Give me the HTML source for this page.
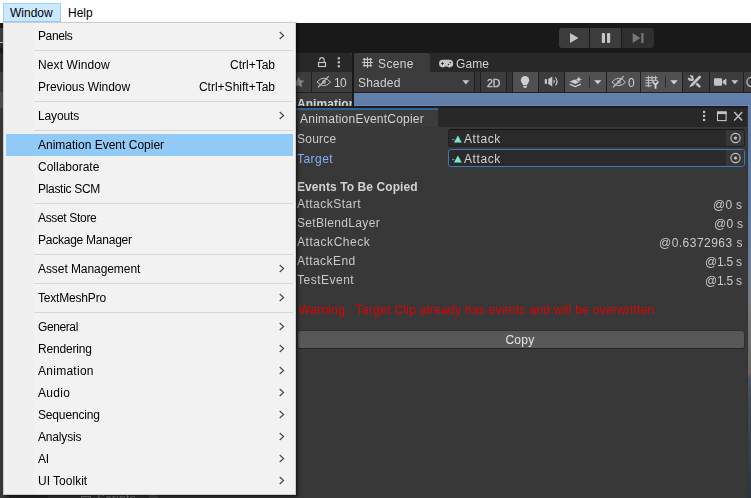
<!DOCTYPE html>
<html>
<head>
<meta charset="utf-8">
<title>Window menu</title>
<style>
html,body{margin:0;padding:0;}
body{width:751px;height:498px;position:relative;overflow:hidden;background:#383838;font-family:"Liberation Sans",sans-serif;font-size:12px;}
.abs{position:absolute;}
.abs, .abs *{box-sizing:border-box;}
/* ---------- Unity editor ---------- */
.u{color:#d2d2d2;white-space:nowrap;line-height:14px;}
.ut{will-change:transform;position:absolute;white-space:nowrap;line-height:14px;height:14px;color:#c9c9c9;}
.row-r{will-change:transform;position:absolute;right:9px;white-space:nowrap;line-height:14px;height:14px;color:#c9c9c9;text-align:right;letter-spacing:0.3px;}
.tb{position:absolute;top:72px;height:20px;background:#3c3c3c;}
.tb.on{background:#505050;}
/* ---------- Win menu ---------- */
#menubar{left:0;top:0;width:751px;height:23px;background:#fff;}
#menu{left:3px;top:22px;width:293px;height:473px;background:#f2f2f2;border:1px solid #cccccc;box-shadow:2px 2px 3px rgba(0,0,0,0.6);}
.mi{position:absolute;left:2px;width:287px;height:22px;line-height:23px;color:#000;}
.mi span.l{position:absolute;left:32px;top:0;}
.mi span.s{position:absolute;right:18px;top:0;}
.mi svg{position:absolute;left:273px;top:6px;}
.mi.hot{background:#91c9f7;}
.sep{position:absolute;left:30px;width:259px;height:1px;background:#d7d7d7;}
</style>
</head>
<body>

<!-- ===== Unity editor background ===== -->
<div class="abs" style="left:0;top:23px;width:751px;height:30px;background:#191919;"></div>
<!-- play controls -->
<div class="abs" style="left:559px;top:28px;width:95px;height:20px;border-radius:3px;overflow:hidden;background:#191919;">
  <div class="abs" style="left:0;top:0;width:30px;height:20px;background:#3c3c3c;"></div>
  <div class="abs" style="left:31px;top:0;width:31px;height:20px;background:#3c3c3c;"></div>
  <div class="abs" style="left:63px;top:0;width:32px;height:20px;background:#2f2f2f;"></div>
  <svg class="abs" style="left:0;top:0" width="95" height="20" viewBox="0 0 95 20">
    <path d="M11 5 L19.5 10 L11 15 Z" fill="#c4c4c4"/>
    <rect x="42.8" y="5" width="3.2" height="10" rx="1" fill="#c4c4c4"/>
    <rect x="48" y="5" width="3.2" height="10" rx="1" fill="#c4c4c4"/>
    <path d="M73.7 5 L81.3 10 L73.7 15 Z" fill="#777"/>
    <rect x="82.3" y="5" width="2.2" height="10" fill="#777"/>
  </svg>
</div>

<!-- tab bar row -->
<div class="abs" style="left:0;top:53px;width:352px;height:19px;background:#282828;border-top-right-radius:4px;"></div>
<div class="abs" style="left:354px;top:53px;width:397px;height:19px;background:#282828;border-top-left-radius:4px;"></div>
<div class="abs" style="left:354px;top:53px;width:76px;height:19px;background:#3c3c3c;border-radius:3px 3px 0 0;"></div>
<!-- lock + kebab -->
<svg class="abs" style="left:316px;top:56px" width="28" height="13" viewBox="0 0 28 13">
  <rect x="2.5" y="6.5" width="7" height="4" fill="none" stroke="#c4c4c4" stroke-width="1.2"/>
  <path d="M8.2 6.5 V3.9 A2.3 2.3 0 0 0 3.6 3.9 V4.6" fill="none" stroke="#c4c4c4" stroke-width="1.2"/>
  <rect x="21.7" y="1.2" width="2.2" height="2.2" fill="#c4c4c4"/>
  <rect x="21.7" y="5.2" width="2.2" height="2.2" fill="#c4c4c4"/>
  <rect x="21.7" y="9.2" width="2.2" height="2.2" fill="#c4c4c4"/>
</svg>
<!-- Scene tab -->
<svg class="abs" style="left:361px;top:57px" width="13" height="12" viewBox="0 0 13 12">
  <path d="M3.4 1 V9.8 M6.5 0.1 V10.9 M9.6 1 V9.8 M1.9 2.4 H11.1 M0.9 5.5 H12.1 M1.9 8.6 H11.1" fill="none" stroke="#c6c6c6" stroke-width="1.1"/>
</svg>
<div class="ut" style="left:378px;top:57px;letter-spacing:0.38px;color:#d2d2d2;">Scene</div>
<svg class="abs" style="left:438px;top:58px" width="16" height="11" viewBox="0 0 16 11">
  <path d="M4.8 1.8 H11.4 A3.8 3.8 0 0 1 11.4 9.4 Q10.2 9.4 9.2 8.5 H6.9 Q5.9 9.4 4.8 9.4 A3.8 3.8 0 0 1 4.8 1.8 Z" fill="#c6c6c6"/>
  <path d="M3.2 5.5 H5.8 M4.5 4.2 V6.8" stroke="#282828" stroke-width="1"/>
  <circle cx="12.4" cy="4.5" r="0.75" fill="#282828"/>
  <circle cx="10.5" cy="6.5" r="0.75" fill="#282828"/>
</svg>
<div class="ut" style="left:456px;top:57px;letter-spacing:0.1px;color:#d2d2d2;">Game</div>

<!-- toolbar row -->
<div class="abs" style="left:0;top:72px;width:751px;height:21px;background:#1f1f1f;"></div>
<div class="tb" style="left:0;width:311px;"></div>
<div class="tb" style="left:312px;width:40px;"></div>
<div class="abs" style="left:352px;top:53px;width:2px;height:54px;background:#191919;"></div>
<svg class="abs" style="left:296px;top:75px" width="12" height="14" viewBox="0 0 12 14">
  <path d="M2.6 1.5 L4.4 5.2 L8.3 5.7 L5.4 8.3 L6.2 12.3 L2.6 10.3 L-1 12.3 L-0.2 8.3 L-3.1 5.7 L0.8 5.2 Z" fill="#8a8a8a"/>
</svg>
<svg class="abs" style="left:316px;top:75px" width="16" height="14" viewBox="0 0 16 14">
  <path d="M1 7.1 Q7.7 -0.7 14.6 7.1 Q7.7 14.3 1 7.1 Z" fill="none" stroke="#c4c4c4" stroke-width="1"/>
  <circle cx="8" cy="7" r="2" fill="#9a9a9a"/>
  <path d="M2 12.3 L12.8 1.1" stroke="#c4c4c4" stroke-width="1.2"/>
</svg>
<div class="ut" style="left:334px;top:76px;color:#d2d2d2;letter-spacing:-0.6px;">10</div>

<div class="tb" style="left:354px;width:120px;"></div>
<div class="ut" style="left:358px;top:76px;letter-spacing:0.2px;color:#d2d2d2;">Shaded</div>
<svg class="abs" style="left:462px;top:80px" width="8" height="5" viewBox="0 0 8 5"><path d="M0.4 0.3 H7.4 L3.9 4.4 Z" fill="#c4c4c4"/></svg>
<div class="tb" style="left:475px;width:5px;background:#353535;"></div>
<div class="tb" style="left:481px;width:25px;"></div>
<div class="ut" style="left:486.5px;top:76px;font-weight:normal;-webkit-text-stroke:0.4px #c4c4c4;font-size:10.5px;color:#c4c4c4;letter-spacing:0px;">2D</div>
<div class="tb" style="left:507px;width:5px;background:#353535;"></div>
<div class="tb on" style="left:513px;width:25px;"></div>
<svg class="abs" style="left:519px;top:75px" width="14" height="14" viewBox="0 0 14 14">
  <circle cx="6.05" cy="5.2" r="4.15" fill="#d0d0d0"/>
  <rect x="3.8" y="7.6" width="4.5" height="2.4" fill="#d0d0d0"/>
  <path d="M4.2 10.7 H7.9 V11.2 A1.85 1.7 0 0 1 4.2 11.2 Z" fill="#d0d0d0"/>
</svg>
<div class="tb" style="left:539px;width:25px;"></div>
<svg class="abs" style="left:544px;top:76px" width="16" height="12" viewBox="0 0 16 12">
  <rect x="0.8" y="3.1" width="2.2" height="4.8" fill="#c4c4c4"/>
  <path d="M4.2 3.1 L8.3 0.6 V10.4 L4.2 7.9 Z" fill="#c4c4c4"/>
  <path d="M9.5 3.8 Q11.2 5.5 9.5 7.2" stroke="#c4c4c4" stroke-width="1.1" fill="none"/>
  <path d="M11.4 1.5 Q14.6 5.5 11.4 9.5" stroke="#c4c4c4" stroke-width="1.2" fill="none"/>
</svg>
<div class="tb on" style="left:565px;width:41px;"></div>
<svg class="abs" style="left:569px;top:75px" width="36" height="14" viewBox="0 0 36 14">
  <path d="M0.8 6.6 L6.2 4.3 L11.8 6.6 L6.2 9 Z" fill="#d0d0d0"/>
  <path d="M0.8 9.2 L6.2 11.6 L11.8 9.2" stroke="#d0d0d0" stroke-width="1.4" fill="none"/>
  <path d="M9.8 0.6 L10.9 3.3 L13.6 4.4 L10.9 5.5 L9.8 8.2 L8.7 5.5 L6 4.4 L8.7 3.3 Z" fill="#d0d0d0" stroke="#505050" stroke-width="0.7"/>
  <path d="M20.5 1.5 V12.5" stroke="#2a2a2a" stroke-width="1"/>
  <path d="M25.2 5.2 H32.4 L28.8 9.3 Z" fill="#d0d0d0"/>
</svg>
<div class="tb" style="left:607px;width:33px;background:#4e4e4e;"></div>
<svg class="abs" style="left:611px;top:75px" width="16" height="14" viewBox="0 0 16 14">
  <path d="M1 7.1 Q7.7 -0.7 14.6 7.1 Q7.7 14.3 1 7.1 Z" fill="none" stroke="#c4c4c4" stroke-width="1"/>
  <circle cx="8" cy="7" r="2" fill="#9a9a9a"/>
  <path d="M2 12.3 L12.8 1.1" stroke="#c4c4c4" stroke-width="1.2"/>
</svg>
<div class="ut" style="left:628.2px;top:76px;color:#d2d2d2;">0</div>
<div class="tb on" style="left:641px;width:41px;"></div>
<svg class="abs" style="left:644px;top:75px" width="36" height="14" viewBox="0 0 36 14">
  <path d="M4.4 0.8 V12.2 M8 0.8 V6.6 M11.6 0.8 V5.6 M1.4 2.7 H13.6 M1.4 5.3 H13.6 M1.4 8 H7.8 M1.4 10.8 H7.8" stroke="#c8c8c8" stroke-width="1" fill="none"/>
  <path d="M8.7 6.5 L11.5 10.1 L14.3 6.5 M11.5 9.6 V13.7" stroke="#d4d4d4" stroke-width="1.8" fill="none"/>
  <path d="M21.5 1.5 V12.5" stroke="#2a2a2a" stroke-width="1"/>
  <path d="M26.3 5.2 H33.7 L30 9.4 Z" fill="#d0d0d0"/>
</svg>
<div class="tb" style="left:683px;width:26px;"></div>
<svg class="abs" style="left:687px;top:75px" width="15" height="14" viewBox="0 0 15 14">
  <path d="M4.6 4 L12.4 11.3" stroke="#c4c4c4" stroke-width="2.5" stroke-linecap="round"/>
  <circle cx="3.7" cy="3" r="2.9" fill="#c4c4c4"/>
  <path d="M3.7 2.8 L1.2 -1 L-0.5 1.2 Z" fill="#3c3c3c" stroke="#3c3c3c" stroke-width="1.2"/>
  <path d="M12.4 2.2 L5 9.8" stroke="#3c3c3c" stroke-width="4.2"/>
  <path d="M12.7 2 L5.4 9.5" stroke="#c4c4c4" stroke-width="2.6" stroke-linecap="round"/>
  <path d="M4.3 8.4 L6.4 10.5 L2 12.6 Z" fill="#c4c4c4"/>
</svg>
<div class="tb" style="left:710px;width:33px;"></div>
<svg class="abs" style="left:713px;top:77px" width="28" height="10" viewBox="0 0 28 10">
  <rect x="1" y="1.2" width="8" height="7.6" rx="1" fill="#c4c4c4"/>
  <path d="M9.6 4 L13.4 1.4 V8.6 L9.6 6 Z" fill="#c4c4c4"/>
  <path d="M18.3 3.2 H25.3 L21.8 7.2 Z" fill="#c4c4c4"/>
</svg>
<div class="tb" style="left:744px;width:7px;"></div>
<svg class="abs" style="left:745px;top:75px" width="6" height="14" viewBox="0 0 6 14">
  <circle cx="6.5" cy="7" r="4.6" fill="none" stroke="#c4c4c4" stroke-width="1.2"/>
</svg>

<!-- hierarchy content -->
<div class="abs" style="left:0;top:93px;width:352px;height:14px;background:#3c3c3c;overflow:hidden;">
  <div class="ut" style="left:297px;top:4px;font-weight:bold;color:#d2d2d2;letter-spacing:0.05px;">Animation</div>
</div>
<!-- scene view -->
<div class="abs" style="left:354px;top:93px;width:397px;height:405px;background:linear-gradient(180deg,#6481ae 0px,#5f7ba6 12px,#6a88b8 12px,#6a88b8 13px,#5f7ba7 13px,#5d7aa5 107px,#6b7f9a 170px,#7a7c7e 207px,#6a6661 280px,#4c5666 286px,#434a55 310px,#30343b 405px);"></div>

<!-- ===== floating AnimationEventCopier window ===== -->
<div class="abs" id="aec" style="left:290px;top:106px;width:458px;height:392px;background:#383838;border-top:2px solid #1c1c1c;border-right:1px solid #343434;">
  <div class="abs" style="left:0;top:0;width:457px;height:19px;background:#282828;"></div>
  <div class="abs" style="left:0;top:0;width:148px;height:19px;background:#3c3c3c;border-top:2px solid #2f6497;"></div>
  <div class="ut" style="left:9.5px;top:4px;letter-spacing:0.23px;color:#d2d2d2;">AnimationEventCopier</div>
  <!-- window buttons -->
  <svg class="abs" style="left:411px;top:1.5px" width="44" height="13" viewBox="0 0 44 13">
    <rect x="2" y="0.8" width="2.2" height="2.2" fill="#c4c4c4"/>
    <rect x="2" y="4.8" width="2.2" height="2.2" fill="#c4c4c4"/>
    <rect x="2" y="8.8" width="2.2" height="2.2" fill="#c4c4c4"/>
    <rect x="16.5" y="2" width="8.6" height="8.6" fill="none" stroke="#c4c4c4" stroke-width="1.1"/>
    <rect x="16" y="1.5" width="9.6" height="2.6" fill="#c4c4c4"/>
    <path d="M33.2 2 L41.2 10.4 M41.2 2 L33.2 10.4" stroke="#c4c4c4" stroke-width="1.4"/>
  </svg>

  <div class="ut" style="left:7px;top:23.5px;letter-spacing:0.25px;">Source</div>
  <div class="ut" style="left:7px;top:43.5px;letter-spacing:0.45px;color:#7fb0f7;">Target</div>

  <div class="abs" style="left:158px;top:21px;width:297px;height:18px;background:#2a2a2a;border:1px solid #212121;border-top-color:#151515;border-radius:3px;overflow:hidden;">
    <div class="abs" style="right:0;top:0;width:18px;height:16px;background:#373737;"></div>
  </div>
  <div class="abs" style="left:158px;top:41px;width:297px;height:18px;background:#2a2a2a;border:1px solid #3a79bb;border-radius:3px;overflow:hidden;">
    <div class="abs" style="right:0;top:0;width:18px;height:16px;background:#373737;"></div>
  </div>
  <svg class="abs" style="left:161px;top:26px" width="12" height="30" viewBox="0 0 12 30">
    <path d="M1 5.6 H3.4" stroke="#8a8a8a" stroke-width="1"/>
    <path d="M3 8.6 L6.9 1.6 L10.8 8.6 Z" fill="#75e6d2"/>
    <path d="M1 25.6 H3.4" stroke="#8a8a8a" stroke-width="1"/>
    <path d="M3 28.6 L6.9 21.6 L10.8 28.6 Z" fill="#75e6d2"/>
  </svg>
  <div class="ut" style="left:174px;top:23.5px;letter-spacing:0.58px;color:#d2d2d2;">Attack</div>
  <div class="ut" style="left:174px;top:43.5px;letter-spacing:0.58px;color:#d2d2d2;">Attack</div>
  <svg class="abs" style="left:439px;top:24px" width="13" height="33" viewBox="0 0 13 33">
    <circle cx="6.5" cy="6" r="4.6" fill="none" stroke="#c4c4c4" stroke-width="1.1"/>
    <circle cx="6.5" cy="6" r="1.6" fill="#c4c4c4"/>
    <circle cx="6.5" cy="26" r="4.6" fill="none" stroke="#c4c4c4" stroke-width="1.1"/>
    <circle cx="6.5" cy="26" r="1.6" fill="#c4c4c4"/>
  </svg>

  <div class="ut" style="left:6.5px;top:72px;font-weight:bold;letter-spacing:0.08px;color:#d2d2d2;">Events To Be Copied</div>
  <div class="ut" style="left:6.5px;top:89px;letter-spacing:0.48px;">AttackStart</div>
  <div class="ut" style="left:6.5px;top:108px;letter-spacing:0.33px;">SetBlendLayer</div>
  <div class="ut" style="left:6.5px;top:127px;letter-spacing:0.55px;">AttackCheck</div>
  <div class="ut" style="left:6.5px;top:146px;letter-spacing:0.44px;">AttackEnd</div>
  <div class="ut" style="left:6.5px;top:165px;letter-spacing:0.5px;">TestEvent</div>
  <div class="row-r" style="top:90px;right:4.5px;">@0 s</div>
  <div class="row-r" style="top:109px;right:4px;">@0 s</div>
  <div class="row-r" style="top:128px;right:4.5px;letter-spacing:0.47px;">@0.6372963 s</div>
  <div class="row-r" style="top:147px;right:5.5px;letter-spacing:-0.25px;">@1.5 s</div>
  <div class="row-r" style="top:166px;right:5.5px;letter-spacing:-0.25px;">@1.5 s</div>

  <div class="ut" style="left:9px;top:195px;letter-spacing:0.28px;color:#e40000;">Warning : Target Clip already has events and will be overwritten</div>

  <div class="abs" style="left:7px;top:222px;width:448px;height:19px;background:#585858;border:1px solid #303030;border-bottom-color:#242424;border-radius:3px;"></div>
  <div class="ut" style="left:6px;top:225px;width:448px;text-align:center;letter-spacing:0.3px;color:#e4e4e4;">Copy</div>
</div>

<!-- left visible strip of editor -->
<div class="abs" style="left:0;top:23px;width:3px;height:475px;background:#383838;">
  <div class="abs" style="left:0;top:0;width:3px;height:5px;background:#191919;"></div>
  <div class="abs" style="left:0;top:5px;width:3px;height:14px;background:#3c3c3c;"></div>
  <div class="abs" style="left:0;top:20px;width:3px;height:5px;background:#2b2b2b;"></div>
  <div class="abs" style="left:0;top:19px;width:3px;height:1px;background:#b0b0b0;"></div>
  <div class="abs" style="left:0;top:25px;width:3px;height:5px;background:#191919;"></div>
  <div class="abs" style="left:0;top:30px;width:3px;height:19px;background:#282828;"></div>
  <div class="abs" style="left:0;top:49px;width:3px;height:20px;background:#3c3c3c;"></div>
  <div class="abs" style="left:0;top:69px;width:3px;height:16px;background:#4d4d4d;"></div>
</div>
<!-- bottom visible strip -->
<div class="abs" style="left:0;top:495px;width:298px;height:3px;background:#383838;">
  <div class="abs" style="left:9px;top:0;width:39px;height:3px;background:#2c2c2c;"></div>
  <div class="abs" style="left:149px;top:0;width:9px;height:3px;background:#505050;"></div>
</div>
<div class="abs u" style="left:97px;top:491.5px;font-size:12px;color:#8c8c8c;letter-spacing:0.35px;will-change:transform;">Scripts</div>
<div class="abs" style="left:81px;top:496px;width:10px;height:2px;border:1px solid #8a8a8a;border-bottom:0;border-radius:1px 1px 0 0;"></div>

<!-- ===== Windows menu bar ===== -->
<div class="abs" id="menubar">
  <div class="abs" style="left:3px;top:3px;width:58px;height:19px;background:#cce8ff;border:1px solid #99d1ff;"></div>
  <div class="abs" style="left:10px;top:4px;line-height:19px;color:#000;">Window</div>
  <div class="abs" style="left:68px;top:4px;line-height:19px;color:#000;">Help</div>
</div>

<!-- ===== popup menu ===== -->
<div class="abs" id="menu">
  <div class="abs" style="left:0;top:0;width:30px;height:471px;background:#f0f0f0;"></div>
  <div class="mi" style="top:2px;"><span class="l" style="letter-spacing:-0.4px">Panels</span><svg width="7" height="9" viewBox="0 0 7 9"><path d="M0.7 1 L4.6 4.5 L0.7 8" fill="none" stroke="#444" stroke-width="1.1"/></svg></div>
  <div class="sep" style="top:27px;"></div>
  <div class="mi" style="top:31px;"><span class="l" style="letter-spacing:0.1px">Next Window</span><span class="s">Ctrl+Tab</span></div>
  <div class="mi" style="top:53px;"><span class="l" style="letter-spacing:-0.04px">Previous Window</span><span class="s">Ctrl+Shift+Tab</span></div>
  <div class="sep" style="top:78px;"></div>
  <div class="mi" style="top:82px;"><span class="l" style="letter-spacing:-0.15px">Layouts</span><svg width="7" height="9" viewBox="0 0 7 9"><path d="M0.7 1 L4.6 4.5 L0.7 8" fill="none" stroke="#444" stroke-width="1.1"/></svg></div>
  <div class="sep" style="top:107px;"></div>
  <div class="mi hot" style="top:111px;"><span class="l">Animation Event Copier</span></div>
  <div class="mi" style="top:133px;"><span class="l">Collaborate</span></div>
  <div class="mi" style="top:155px;"><span class="l" style="letter-spacing:-0.31px">Plastic SCM</span></div>
  <div class="sep" style="top:180px;"></div>
  <div class="mi" style="top:184px;"><span class="l" style="letter-spacing:-0.33px">Asset Store</span></div>
  <div class="mi" style="top:206px;"><span class="l" style="letter-spacing:-0.24px">Package Manager</span></div>
  <div class="sep" style="top:231px;"></div>
  <div class="mi" style="top:235px;"><span class="l" style="letter-spacing:-0.07px">Asset Management</span><svg width="7" height="9" viewBox="0 0 7 9"><path d="M0.7 1 L4.6 4.5 L0.7 8" fill="none" stroke="#444" stroke-width="1.1"/></svg></div>
  <div class="sep" style="top:260px;"></div>
  <div class="mi" style="top:264px;"><span class="l" style="letter-spacing:-0.19px">TextMeshPro</span><svg width="7" height="9" viewBox="0 0 7 9"><path d="M0.7 1 L4.6 4.5 L0.7 8" fill="none" stroke="#444" stroke-width="1.1"/></svg></div>
  <div class="sep" style="top:289px;"></div>
  <div class="mi" style="top:293px;"><span class="l" style="letter-spacing:-0.4px">General</span><svg width="7" height="9" viewBox="0 0 7 9"><path d="M0.7 1 L4.6 4.5 L0.7 8" fill="none" stroke="#444" stroke-width="1.1"/></svg></div>
  <div class="mi" style="top:315px;"><span class="l" style="letter-spacing:-0.18px">Rendering</span><svg width="7" height="9" viewBox="0 0 7 9"><path d="M0.7 1 L4.6 4.5 L0.7 8" fill="none" stroke="#444" stroke-width="1.1"/></svg></div>
  <div class="mi" style="top:337px;"><span class="l" style="letter-spacing:0.27px">Animation</span><svg width="7" height="9" viewBox="0 0 7 9"><path d="M0.7 1 L4.6 4.5 L0.7 8" fill="none" stroke="#444" stroke-width="1.1"/></svg></div>
  <div class="mi" style="top:359px;"><span class="l" style="letter-spacing:0.32px">Audio</span><svg width="7" height="9" viewBox="0 0 7 9"><path d="M0.7 1 L4.6 4.5 L0.7 8" fill="none" stroke="#444" stroke-width="1.1"/></svg></div>
  <div class="mi" style="top:381px;"><span class="l" style="letter-spacing:-0.16px">Sequencing</span><svg width="7" height="9" viewBox="0 0 7 9"><path d="M0.7 1 L4.6 4.5 L0.7 8" fill="none" stroke="#444" stroke-width="1.1"/></svg></div>
  <div class="mi" style="top:403px;"><span class="l" style="letter-spacing:-0.17px">Analysis</span><svg width="7" height="9" viewBox="0 0 7 9"><path d="M0.7 1 L4.6 4.5 L0.7 8" fill="none" stroke="#444" stroke-width="1.1"/></svg></div>
  <div class="mi" style="top:425px;"><span class="l" style="letter-spacing:-0.3px">AI</span><svg width="7" height="9" viewBox="0 0 7 9"><path d="M0.7 1 L4.6 4.5 L0.7 8" fill="none" stroke="#444" stroke-width="1.1"/></svg></div>
  <div class="mi" style="top:447px;"><span class="l">UI Toolkit</span><svg width="7" height="9" viewBox="0 0 7 9"><path d="M0.7 1 L4.6 4.5 L0.7 8" fill="none" stroke="#444" stroke-width="1.1"/></svg></div>
</div>

</body>
</html>
